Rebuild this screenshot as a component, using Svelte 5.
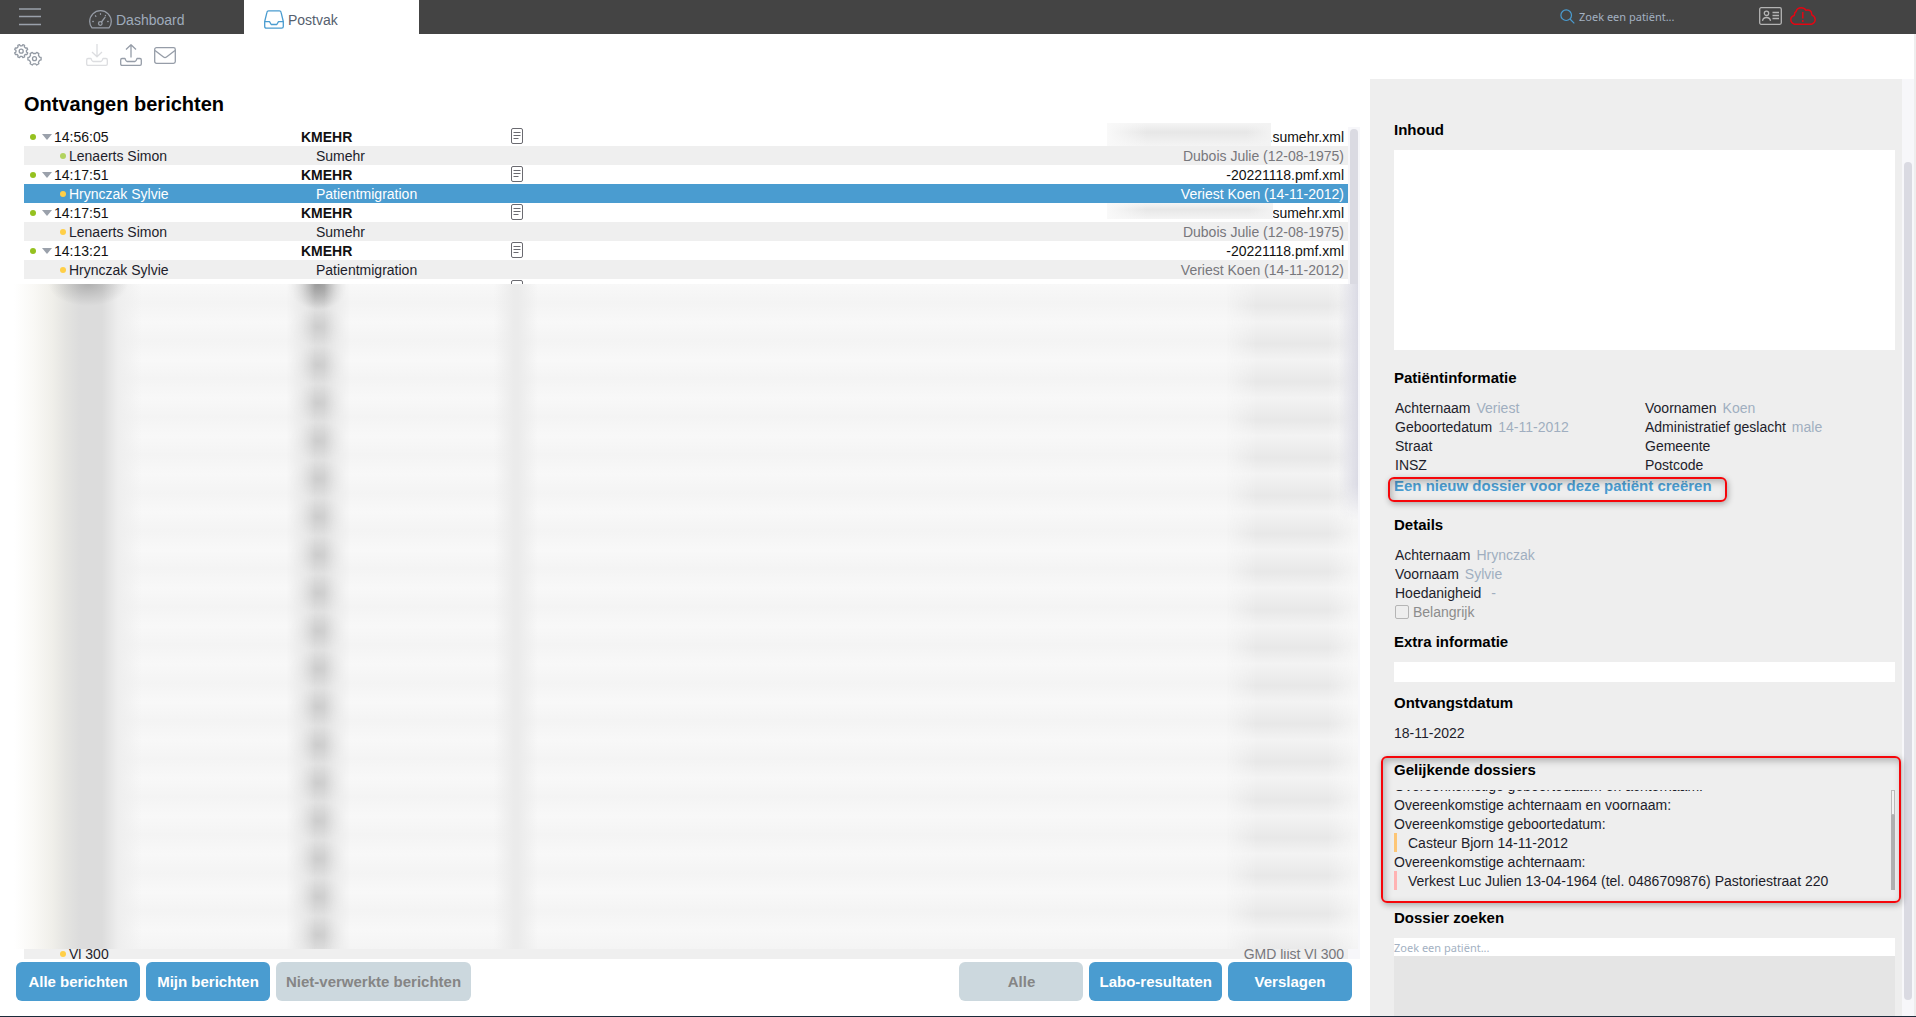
<script>
    const messages = [
        { time: '14:56:05', file: '.sumehr.xml', redacted: true, sender: 'Lenaerts Simon', status: 'light', type: 'Sumehr', patient: 'Dubois Julie (12-08-1975)' },
        { time: '14:17:51', file: '-20221118.pmf.xml', sender: 'Hrynczak Sylvie', status: 'yellow', type: 'Patientmigration', patient: 'Veriest Koen (14-11-2012)' },
        { time: '14:17:51', file: 'sumehr.xml', redacted: true, sender: 'Lenaerts Simon', status: 'yellow', type: 'Sumehr', patient: 'Dubois Julie (12-08-1975)' },
        { time: '14:13:21', file: '-20221118.pmf.xml', sender: 'Hrynczak Sylvie', status: 'yellow', type: 'Patientmigration', patient: 'Veriest Koen (14-11-2012)' }
    ]

    const patientFields = [
        ['Achternaam', 'Veriest'],
        ['Voornamen', 'Koen'],
        ['Geboortedatum', '14-11-2012'],
        ['Administratief geslacht', 'male'],
        ['Straat', ''],
        ['Gemeente', ''],
        ['INSZ', ''],
        ['Postcode', '']
    ]

    const detailFields = [
        ['Achternaam', 'Hrynczak'],
        ['Voornaam', 'Sylvie'],
        ['Hoedanigheid', '\u00a0-']
    ]

    // outline of a gear with the given number of teeth
    const gear = (cx, cy, teeth, turn) => {
        const points = []
        for (let i = 0; i < teeth; i++) {
            const a = ((i + turn) / teeth) * 2 * Math.PI
            const w = Math.PI / teeth
            for (const [r, o] of [[5.3, -0.6], [6.7, -0.35], [6.7, 0.35], [5.3, 0.6]]) {
                points.push(`${(cx + r * Math.cos(a + o * w)).toFixed(2)} ${(cy + r * Math.sin(a + o * w)).toFixed(2)}`)
            }
        }
        return `M${points.join('L')}Z`
    }

    let selected = $state(1)
    let important = $state(false)
    let search = $state('')
    let dossierSearch = $state('')
</script>

{#snippet docIcon()}
    <svg class="doc" width="12" height="17" viewBox="0 0 12 17" fill="none" stroke="#6a6a70">
        <rect x="0.5" y="0.5" width="11" height="15" rx="1.5" />
        <path d="M2.5 4.5h7M2.5 7.5h7M2.5 10.5h5" />
    </svg>
{/snippet}

{#snippet columns()}
    <colgroup>
        <col class="col-name" />
        <col class="col-type" />
        <col class="col-doc" />
        <col />
    </colgroup>
{/snippet}

<div class="app">
    <header class="topbar">
        <button class="menu" aria-label="Menu">
            <svg width="22" height="18" viewBox="0 0 22 18" stroke="#9aa1ab" stroke-width="1.5">
                <path d="M0 1h22M0 8.500h22M0 16.500h22" />
            </svg>
        </button>
        <nav>
            <a class="tab" href="#dashboard">
                <svg width="23" height="19" viewBox="0 0 23 19" fill="none" stroke="#969ca6" stroke-width="1.3" stroke-linecap="round">
                    <path d="M3 17.800Q.7 15 .7 11.500A10.800 10.800 0 0 1 22.300 11.500Q22.300 15 20 17.800Z" />
                    <circle cx="11.300" cy="13.500" r="1.800" />
                    <path d="M12.500 12 16 7.300M11.500 3.700v.6M6.500 5.800l.4.500M3.800 11.500h.5M18.700 11.500h.5M16.500 5.500l-.1.100" />
                </svg>
                Dashboard
            </a>
            <a class="tab active" href="#postvak">
                <svg width="20" height="19" viewBox="0 0 20 19" fill="none" stroke="#4a9cd0" stroke-width="1.300" stroke-linejoin="round">
                    <path d="M3 2.200Q3.200.8 4.600.8H15.400Q16.800.8 17 2.200L19.300 11.500V16.500Q19.300 18.200 17.600 18.200H2.400Q.7 18.200.7 16.500V11.500Z" />
                    <path d="M.8 11.600H5.500L7.200 14.500H12.800L14.500 11.600H19.200" />
                </svg>
                Postvak
            </a>
        </nav>
        <div class="tools">
            <label class="search">
                <svg width="15" height="15" viewBox="0 0 15 15" fill="none" stroke="#4a9cd0" stroke-width="1.200">
                    <circle cx="6.200" cy="6.200" r="5.300" />
                    <path d="M10 10l4.300 4.300" />
                </svg>
                <input type="text" aria-label="Patiënt zoeken" placeholder="Zoek een patiënt..." bind:value={search} />
            </label>
            <button aria-label="Kaartlezer">
                <svg width="23" height="18" viewBox="0 0 23 18" fill="none" stroke="#b4b4b4" stroke-width="1.300">
                    <rect x="0.700" y="0.700" width="21.600" height="16.600" rx="1.500" />
                    <circle cx="7.500" cy="6.300" r="2.200" />
                    <path d="M3.500 13.800Q4 10.500 7.500 10.500Q11 10.500 11.500 13.800M13.500 5.500H20M13.500 8.500H20M13.500 11.500H20" />
                </svg>
            </button>
            <button aria-label="Verbinding verbroken">
                <svg width="26" height="18" viewBox="0 0 26 18" fill="none" stroke="#e30613" stroke-width="1.500" stroke-linejoin="round">
                    <path d="M4.500 17.200Q.8 16 .8 12.500Q.8 9.500 4.300 8.500Q4.300 5.500 6 4.500Q7.500.8 11 .8Q14.500.8 15.800 3.200Q21.500 1.800 21.800 7.800Q25.200 9.500 25.200 12.500Q25.200 16 21.500 17.200Z" />
                    <path d="M12.800 5v6.500M12.800 13v2" />
                </svg>
            </button>
        </div>
    </header>

    <div class="body">
        <div class="toolbar">
            <button class="gears" aria-label="Instellingen">
                <svg width="28" height="22" viewBox="0 0 28 22" fill="none" stroke="#9299a3" stroke-width="1.300" stroke-linejoin="round">
                    <path d={gear(7.2, 7.2, 8, 0.5)} />
                    <circle cx="7.200" cy="7.200" r="2" />
                    <path d={gear(20.500, 14.700, 6, 0)} />
                    <circle cx="20.500" cy="14.700" r="2" />
                </svg>
            </button>
            <button aria-label="Importeren" disabled>
                <svg width="22" height="22" viewBox="0 0 22 22" fill="none" stroke="#dcdde0" stroke-width="1.300" stroke-linejoin="round">
                    <path d="M11 0V12.500M6 8l5 4.700L16 8" />
                    <path d="M2 14.500H5Q6 17.500 7 17.500H15Q16 17.500 17 14.500H20Q21.300 14.500 21.300 16V20Q21.300 21.300 20 21.300H2Q.7 21.300.7 20V16Q.7 14.500 2 14.500Z" />
                </svg>
            </button>
            <button aria-label="Exporteren">
                <svg width="22" height="22" viewBox="0 0 22 22" fill="none" stroke="#969da8" stroke-width="1.300" stroke-linejoin="round">
                    <path d="M11 13.500V1M6 5.500L11 .8l5 4.700" />
                    <path d="M2 14.500H5Q6 17.500 7 17.500H15Q16 17.500 17 14.500H20Q21.300 14.500 21.300 16V20Q21.300 21.300 20 21.300H2Q.7 21.300.7 20V16Q.7 14.500 2 14.500Z" />
                </svg>
            </button>
            <button aria-label="Nieuw bericht">
                <svg width="22" height="17" viewBox="0 0 22 17" fill="none" stroke="#969da8" stroke-width="1.300">
                    <rect x="0.700" y="0.700" width="20.600" height="15.600" rx="1.800" />
                    <path d="M1 3.500L9.500 10Q11 11.200 12.500 10L21 3.500" />
                </svg>
            </button>
        </div>

        <div class="content">
            <main>
                <h1>Ontvangen berichten</h1>
                <div class="list">
                    <div class="rows">
                        <table>
                            {@render columns()}
                            <tbody>
                                {#each messages as m, i}
                                    <tr>
                                        <td><div class="cell"><i class="dot green"></i><i class="arrow"></i>{m.time}</div></td>
                                        <td class="kind">KMEHR</td>
                                        <td class="icon">{@render docIcon()}</td>
                                        <td class="file">
                                            {#if m.redacted}<span class="smudge"></span>{/if}{m.file}
                                        </td>
                                    </tr>
                                    <tr class="sub" class:selected={selected === i} onclick={() => (selected = i)}>
                                        <td><div class="cell"><i class="dot {m.status}"></i>{m.sender}</div></td>
                                        <td>{m.type}</td>
                                        <td></td>
                                        <td class="file">{m.patient}</td>
                                    </tr>
                                {/each}
                            </tbody>
                        </table>
                        <div class="cut">{@render docIcon()}</div>
                        <div class="blurred">
                            <div class="smear names"></div>
                            <div class="smear kinds"></div>
                            <div class="smear docs"></div>
                            <div class="smear patients"></div>
                            <div class="smear bar"></div>
                        </div>
                        <table>
                            {@render columns()}
                            <tbody>
                                <tr class="sub last">
                                    <td><div class="cell"><i class="dot yellow"></i>Vl 300</div></td>
                                    <td></td>
                                    <td></td>
                                    <td class="file"><div class="cell end">GMD liist Vl 300</div></td>
                                </tr>
                            </tbody>
                        </table>
                    </div>
                    <div class="scroll"><div class="thumb"></div></div>
                </div>
                <footer>
                    <button>Alle berichten</button>
                    <button>Mijn berichten</button>
                    <button disabled>Niet-verwerkte berichten</button>
                    <span class="spacer"></span>
                    <button disabled>Alle</button>
                    <button>Labo-resultaten</button>
                    <button>Verslagen</button>
                </footer>
            </main>

            <aside>
                <div class="panel">
                    <section class="first">
                        <h2 id="inhoud">Inhoud</h2>
                        <textarea class="inhoud" aria-labelledby="inhoud"></textarea>
                    </section>
                    <section>
                        <h2>Patiëntinformatie</h2>
                        <div class="fields two">
                            {#each patientFields as [label, value]}
                                <div>{label}<span>{value}</span></div>
                            {/each}
                        </div>
                        <a class="create" href="#nieuw">Een nieuw dossier voor deze patiënt creëren</a>
                    </section>
                    <section>
                        <h2>Details</h2>
                        <div class="fields">
                            {#each detailFields as [label, value]}
                                <div>{label}<span>{value}</span></div>
                            {/each}
                        </div>
                        <label class="check">
                            <input type="checkbox" bind:checked={important} />
                            Belangrijk
                        </label>
                    </section>
                    <section class="tight">
                        <h2 id="extra">Extra informatie</h2>
                        <input class="extra" type="text" aria-labelledby="extra" />
                    </section>
                    <section class="tight">
                        <h2>Ontvangstdatum</h2>
                        <div class="date">18-11-2022</div>
                    </section>
                    <section class="similar">
                        <h2>Gelijkende dossiers</h2>
                        <div class="matches">
                            <ul>
                                <li>Overeenkomstige geboortedatum en achternaam:</li>
                                <li>Overeenkomstige achternaam en voornaam:</li>
                                <li>Overeenkomstige geboortedatum:</li>
                                <li class="match orange">Casteur Bjorn 14-11-2012</li>
                                <li>Overeenkomstige achternaam:</li>
                                <li class="match pink">Verkest Luc Julien 13-04-1964 (tel. 0486709876) Pastoriestraat 220</li>
                            </ul>
                            <div class="mini"></div>
                        </div>
                    </section>
                    <section class="fill">
                        <h2 id="zoeken">Dossier zoeken</h2>
                        <input class="dossier" type="text" aria-labelledby="zoeken" placeholder="Zoek een patiënt..." bind:value={dossierSearch} />
                        <div class="results"></div>
                    </section>
                </div>
                <div class="scroll side"><div class="thumb"></div></div>
            </aside>
        </div>
    </div>
</div>

<style>
    :global(body) {
        background: #fff;
    }

    .app {
        height: 100vh;
        display: flex;
        flex-direction: column;
        box-sizing: border-box;
        border-bottom: 1px solid #1b2a3a;
        overflow: hidden;
        font-family: "Liberation Sans", Arial, sans-serif;
        font-size: 14px;
        line-height: 18px;
        color: #1d1d2b;
    }

    button {
        padding: 0;
        border: none;
        background: none;
        font: inherit;
        cursor: pointer;
    }

    svg {
        display: block;
        flex: none;
    }

    input, textarea {
        box-sizing: border-box;
        padding: 0;
        border: none;
        border-radius: 0;
        outline: none;
        font-family: "Noto Sans", sans-serif;
        font-size: 11px;
    }

    .topbar {
        flex: none;
        display: flex;
        height: 34px;
        background: #444;
    }

    .menu {
        width: 69px;
        padding: 0 0 0 19px;
    }

    nav {
        display: flex;
    }

    .tab {
        display: flex;
        align-items: center;
        gap: 4px;
        box-sizing: border-box;
        width: 175px;
        padding: 5px 20px 0;
        color: #9fabbb;
        text-decoration: none;
    }

    .tab.active {
        background: #fff;
        color: #55606e;
    }

    .tools {
        display: flex;
        align-items: center;
        gap: 8px;
        margin-left: auto;
        padding: 0 100px 2px 0;
    }

    .search {
        display: flex;
        align-items: center;
        gap: 4px;
    }

    .search input {
        width: 172px;
        height: 20px;
        background: none;
        color: #fff;
    }

    .search input::placeholder, .dossier::placeholder {
        color: #a3b1c2;
        opacity: 1;
    }

    .body {
        flex: 1;
        min-height: 0;
        display: flex;
        flex-direction: column;
        border-right: 2px solid #eee;
    }

    .toolbar {
        flex: none;
        display: flex;
        align-items: center;
        gap: 12px;
        height: 45px;
        padding: 0 14px 3px;
        box-sizing: border-box;
    }

    .gears {
        margin-right: 32px;
    }

    .content {
        flex: 1;
        min-height: 0;
        display: flex;
    }

    main {
        flex: 1;
        min-width: 0;
        display: flex;
        flex-direction: column;
    }

    h1 {
        margin: 0;
        padding: 13px 24px 11px;
        font-size: 20px;
        line-height: 24px;
        color: #000;
    }

    .list {
        flex: 1;
        min-height: 0;
        display: flex;
        margin: 0 10px 0 24px;
    }

    .rows {
        flex: 1;
        min-width: 0;
        display: flex;
        flex-direction: column;
    }

    table {
        width: 100%;
        table-layout: fixed;
        border-collapse: collapse;
    }

    .col-name {
        width: 277px;
    }

    .col-type {
        width: 210px;
    }

    .col-doc {
        width: 20px;
    }

    td {
        height: 18px;
        padding: 1px 0 0;
        white-space: nowrap;
    }

    td.icon {
        padding: 0;
    }

    tr {
        color: #111;
    }

    .kind {
        font-weight: bold;
    }

    .cell {
        display: flex;
        align-items: center;
        padding-left: 6px;
    }

    .dot {
        width: 6px;
        height: 6px;
        margin-right: 6px;
        border-radius: 50%;
    }

    .green {
        background: #95c11f;
    }

    .light {
        background: #b2d35f;
    }

    .yellow {
        background: #ffcf47;
    }

    .arrow {
        margin-right: 2px;
        border: 5px solid transparent;
        border-top: 6px solid #9ba1ab;
        border-bottom: 0;
    }

    .file {
        position: relative;
        padding-right: 4px;
        text-align: right;
    }

    .sub {
        background: #efefef;
        color: #1d1d2b;
    }

    .sub .cell {
        padding-left: 36px;
    }

    .sub .dot {
        margin-right: 3px;
    }

    .sub td:nth-child(2) {
        padding-left: 15px;
    }

    .sub .file {
        color: #77777c;
    }

    .sub .end {
        justify-content: flex-end;
        padding: 0;
    }

    .selected, .sub.selected .file {
        background: #4a9cd0;
        color: #fff;
    }

    .last td {
        height: 10px;
        padding-top: 0;
    }

    .last .cell {
        height: 10px;
        line-height: 10px;
        overflow: hidden;
    }

    .smudge {
        position: absolute;
        right: 75px;
        top: 0;
        width: 166px;
        height: 16px;
        background:
            linear-gradient(90deg, #f9f9f9, transparent 40px, transparent 85%, #f3f3f3),
            linear-gradient(#f5f5f5, #e7e7e7 40%, #f4f4f4);
    }

    tr:first-child .smudge {
        right: 77px;
        top: -4px;
        width: 164px;
        height: 23px;
    }

    .cut {
        flex: none;
        height: 4px;
        padding: 1px 0 0 487px;
        overflow: hidden;
    }

    .blurred {
        position: relative;
        z-index: 1;
        flex: 1;
        margin: 0 -10px;
        overflow: hidden;
        background: repeating-linear-gradient(#f8f8f8 0, #f4f4f4 19px, #f8f8f8 38px);
    }

    .smear {
        position: absolute;
        top: 0;
        bottom: 0;
    }

    .names {
        left: 0;
        width: 132px;
        background:
            linear-gradient(rgba(247, 247, 247, 0), rgba(247, 247, 247, 0)),
            radial-gradient(40px 22px at 74px 0, rgba(110, 110, 110, 0.4), rgba(110, 110, 110, 0.15) 60%, transparent),
            linear-gradient(90deg, #fff, #f9f8f5 20px, #f0efea 38px, #e4e4e1 52px, #dcdcdc 66px, #dcdcdc 88px, #eeeeee 104px, transparent 128px);
    }

    .kinds {
        left: 272px;
        width: 64px;
        background:
            radial-gradient(30px 26px at 50% 0, #9a9a9a, transparent),
            radial-gradient(30px 19px at 50% 50%, #cdcdcd, #d6d6d6 45%, transparent) 0 24px / 100% 38px,
            #e1e1e1;
        mask-image: linear-gradient(90deg, transparent, rgba(0, 0, 0, 0.5) 25%, #000 45%, #000 60%, rgba(0, 0, 0, 0.5) 78%, transparent);
    }

    .docs {
        left: 480px;
        width: 44px;
        background: linear-gradient(90deg, transparent, #ebebeb 45%, #ebebeb 55%, transparent);
    }

    .patients {
        right: 4px;
        width: 128px;
        background: repeating-linear-gradient(#f3f3f3 0, #e8e8e8 22px, #f3f3f3 38px);
        mask-image: linear-gradient(90deg, transparent, #000 30px, #000 80%, transparent);
    }

    .bar {
        right: 0;
        bottom: auto;
        width: 20px;
        height: 236px;
        background: linear-gradient(90deg, transparent, #dadae4);
        mask-image: linear-gradient(#000 85%, transparent);
    }

    .scroll {
        flex: none;
        width: 12px;
        box-sizing: border-box;
        padding: 2px;
        background: #f7f7fa;
    }

    .thumb {
        height: 46%;
        border-radius: 4px;
        background: #dadae2;
    }

    footer {
        flex: none;
        display: flex;
        gap: 6px;
        padding: 3px 18px 15px 16px;
    }

    footer button {
        min-width: 124px;
        height: 39px;
        padding: 0 10px;
        border-radius: 6px;
        background: #4a9cd0;
        color: #fff;
        font-size: 15px;
        font-weight: bold;
    }

    footer button:disabled {
        background: #ccd8de;
        color: #858585;
    }

    .spacer {
        flex: 1;
    }

    aside {
        flex: none;
        display: flex;
        width: 544px;
        background: #eee;
    }

    .panel {
        flex: 1;
        min-width: 0;
        display: flex;
        flex-direction: column;
        padding: 41px 7px 0 24px;
    }

    section {
        flex: none;
        position: relative;
        margin-top: 18px;
    }

    section.first {
        margin-top: 0;
    }

    section.tight {
        margin-top: 11px;
    }

    section.fill {
        flex: 1;
        min-height: 0;
        display: flex;
        flex-direction: column;
    }

    h2 {
        margin: 0 0 10px;
        font-size: 15px;
        line-height: 20px;
        color: #000;
    }

    textarea, .extra, .dossier {
        display: block;
        width: 100%;
        background: #fff;
    }

    .inhoud {
        height: 200px;
        resize: none;
    }

    .extra {
        height: 20px;
    }

    .dossier {
        flex: none;
        height: 18px;
    }

    .results {
        flex: 1;
        background: #e5e5e5;
    }

    .fields {
        padding-left: 1px;
    }

    .fields div, .date, li {
        padding-top: 1px;
    }

    .fields span {
        margin-left: 6px;
        color: #a0aec0;
    }

    .two {
        display: grid;
        grid-template-columns: 1fr 1fr;
    }

    .create {
        position: relative;
        display: table;
        margin: 2px 0 1px;
        font-size: 15px;
        font-weight: bold;
        line-height: 20px;
        color: #4a9cd0;
        text-decoration: none;
    }

    /* red highlight frames drawn over the panel */
    .create::after, .similar::after {
        content: '';
        position: absolute;
        inset: 1px -15px -6px -6px;
        border: 2px solid #f5060a;
        border-radius: 6px;
        box-shadow: 1px 2px 6px rgba(0, 0, 0, 0.3), inset 2px 3px 7px rgba(0, 0, 0, 0.25);
        pointer-events: none;
    }

    .similar::after {
        inset: -4px -6px -13px -13px;
    }

    .check {
        display: flex;
        align-items: center;
        gap: 4px;
        padding: 1px 0 0 1px;
        color: #8c8c8c;
    }

    .check input {
        appearance: none;
        width: 14px;
        height: 14px;
        margin: 0;
        border: 1px solid #b5b5b5;
        border-radius: 2px;
    }

    .check input:checked {
        background: #4a9cd0;
    }

    .matches {
        display: flex;
        height: 100px;
        overflow: hidden;
    }

    ul {
        flex: 1;
        display: flex;
        flex-direction: column;
        justify-content: flex-end;
        margin: 0;
        padding: 0;
        list-style: none;
    }

    .match {
        padding-left: 11px;
        border-left: 3px solid;
    }

    .orange {
        border-color: #fdc676;
    }

    .pink {
        border-color: #ffb3b3;
    }

    .mini {
        width: 4px;
        background: #b0b0b0;
    }

    .mini::before {
        content: '';
        display: block;
        height: 23px;
        border: 1px solid #bbb;
        background: #f4f4f4;
    }

    .side {
        padding-top: 83px;
        padding-bottom: 16px;
    }

    .side .thumb {
        height: 100%;
    }
</style>
